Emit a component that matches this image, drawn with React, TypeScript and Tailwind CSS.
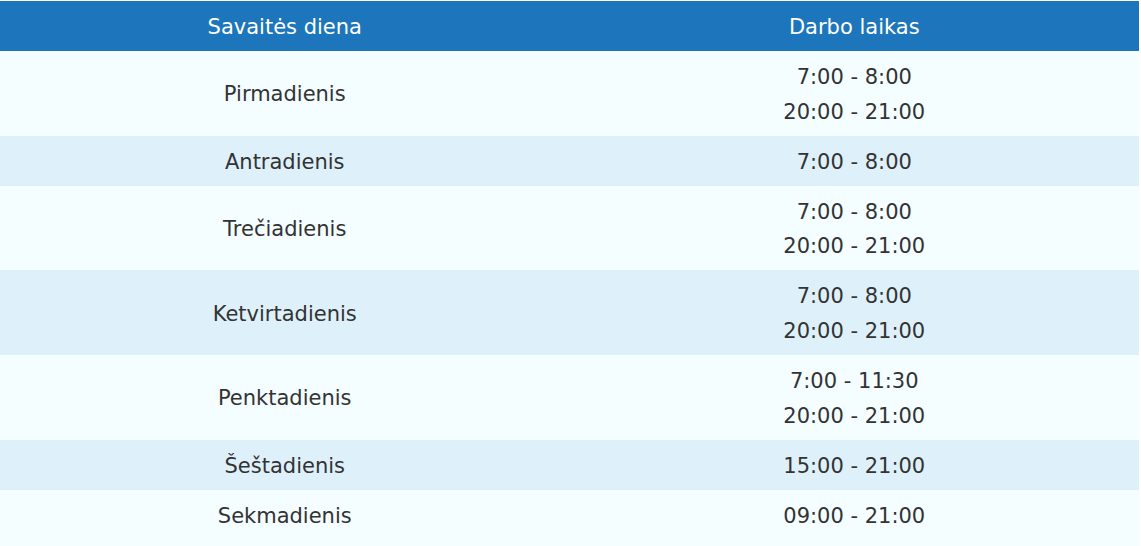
import React from 'react';

const rows = [
  { day: 'Pirmadienis', hours: ['7:00 - 8:00', '20:00 - 21:00'] },
  { day: 'Antradienis', hours: ['7:00 - 8:00'] },
  { day: 'Trečiadienis', hours: ['7:00 - 8:00', '20:00 - 21:00'] },
  { day: 'Ketvirtadienis', hours: ['7:00 - 8:00', '20:00 - 21:00'] },
  { day: 'Penktadienis', hours: ['7:00 - 11:30', '20:00 - 21:00'] },
  { day: 'Šeštadienis', hours: ['15:00 - 21:00'] },
  { day: 'Sekmadienis', hours: ['09:00 - 21:00'] },
];

export default function App() {
  return (
    <div className="w-[1141px] h-[546px] overflow-hidden bg-white pt-px font-['DejaVu_Sans',sans-serif] text-[21px] text-[#333]">
      <div className="w-[1139px]">
        <div className="grid grid-cols-2 h-[50px] pt-[3px] bg-[#1d76bb] text-white">
          <div className="flex items-center justify-center">Savaitės diena</div>
          <div className="flex items-center justify-center">Darbo laikas</div>
        </div>
        {rows.map((row, i) => (
          <div
            key={row.day}
            className={`grid grid-cols-2 pt-[9px] pb-[6.2px] leading-[34.75px] last:pb-[20px] ${
              i % 2 === 0 ? 'bg-[#f4fdff]' : 'bg-[#def1fa]'
            }`}
          >
            <div className="flex items-center justify-center">{row.day}</div>
            <div className="flex flex-col items-center justify-center">
              {row.hours.map((h) => (
                <span key={h}>{h}</span>
              ))}
            </div>
          </div>
        ))}
      </div>
    </div>
  );
}
